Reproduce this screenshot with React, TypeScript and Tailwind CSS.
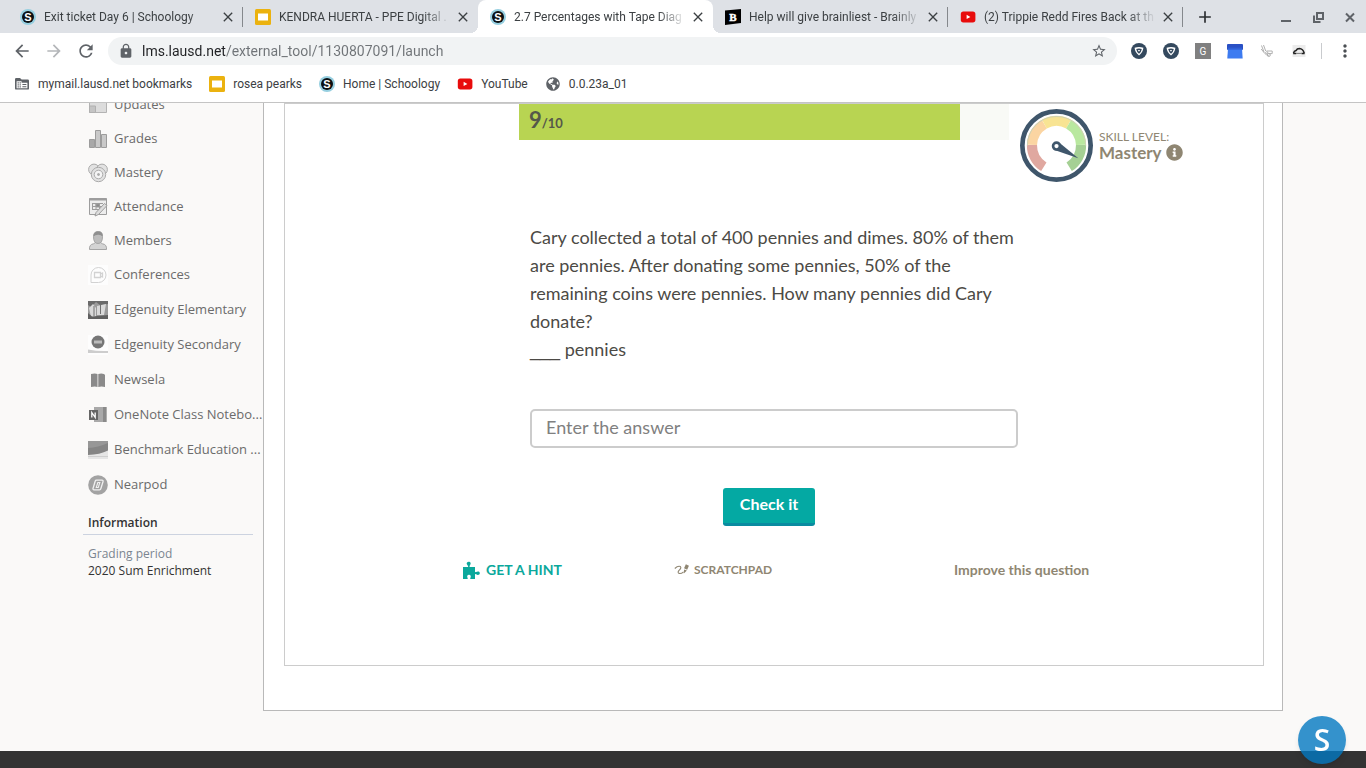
import React, { useState } from 'react';
import {
  MdAdd,
  MdArrowBack,
  MdArrowForward,
  MdClose,
  MdLock,
  MdMoreVert,
  MdRefresh,
  MdStarBorder,
} from 'react-icons/md';
import { FaGlobeAmericas, FaInfoCircle } from 'react-icons/fa';

/* ---------- browser icons ---------- */

const SchoologyIcon = () => (
  <svg viewBox="0 0 16 16" className="size-4 shrink-0">
    <circle cx="8" cy="8" r="8" fill="#96cfe0" />
    <circle cx="8" cy="8" r="6" fill="#0b0f12" />
    <text x="8" y="11.8" textAnchor="middle" fontSize="11" fontWeight="700" fill="#fff" fontFamily="Liberation Sans, sans-serif">S</text>
  </svg>
);

const SlidesIcon = () => (
  <svg viewBox="0 0 16 16" className="size-4 shrink-0">
    <rect width="16" height="16" rx="1.5" fill="#ebb20f" />
    <rect x="3" y="4.5" width="10" height="7" fill="#fff" />
  </svg>
);

const BrainlyIcon = () => (
  <svg viewBox="0 0 16 16" className="size-4 shrink-0">
    <path d="M0 1.5 16 0v14L0 16z" fill="#000" />
    <text x="8" y="11.8" textAnchor="middle" fontSize="11" fontWeight="700" fill="#fff" stroke="#fff" strokeWidth="0.4" fontFamily="Liberation Serif, serif">B</text>
  </svg>
);

const YouTubeIcon = () => (
  <svg viewBox="0 0 16 16" className="size-4 shrink-0">
    <rect x="0.8" y="2.4" width="14.6" height="11" rx="2.6" fill="#e80c0c" />
    <path d="M6.6 5.7v4.4l3.8-2.2z" fill="#fff" />
  </svg>
);

const ManagedFolderIcon = () => (
  <svg viewBox="0 0 16 16" className="size-4 shrink-0">
    <path d="M1 3.200Q1 2 2.200 2H6l1.600 1.600h6.200Q15 3.600 15 4.800v7.600q0 1.200-1.200 1.200H2.200Q1 13.600 1 12.400z" fill="#5f6368" />
    <path d="M2.600 5.200h5v1.600h5.800v5.400H2.600z" fill="#fff" />
    <path d="M3.600 6.200h1.200v1.200H3.600zm2 0h1.200v1.200H5.600zm-2 2h1.200v1.200H3.600zm2 0h1.200v1.200H5.600zm-2 2h1.200v1.200H3.600zm2 0h1.200v1.200H5.600zM8.400 8h4v1.100h-4zm0 2.200h4v1.100h-4z" fill="#5f6368" />
  </svg>
);

const ShieldIcon = () => (
  <svg viewBox="0 0 16 16" className="size-4">
    <circle cx="8" cy="8" r="8" fill="#34495e" />
    <path d="M3.600 4.800Q8 3.300 12.400 4.800 12 9.400 8 12.600 4 9.400 3.600 4.800z" fill="#fff" />
    <path d="M5.200 6Q8 5.200 10.800 6 10.400 8.800 8 10.800 5.600 8.800 5.200 6z" fill="#34495e" />
    <path d="M6.900 7h2.200L8 8.800z" fill="#fff" />
  </svg>
);

const GrammarIcon = () => (
  <svg viewBox="0 0 16 16" className="size-4">
    <rect width="16" height="16" fill="#808080" />
    <text x="8" y="11.6" textAnchor="middle" fontSize="10" fill="#fff" fontFamily="Roboto, sans-serif">G</text>
  </svg>
);

const BlueWindowIcon = () => (
  <svg viewBox="0 0 16 16" className="size-4">
    <rect y="1" width="16" height="6" rx="1" fill="#2a50c4" />
    <path d="M1 5h14l.7 10.6H.3z" fill="#3d7bf0" />
    <path d="M1 4.6h14v2H1z" fill="#2f5fd6" />
  </svg>
);

const WandIcon = () => (
  <svg viewBox="0 0 16 16" className="size-4" fill="none" stroke="#b0b0b0" strokeWidth="1">
    <path d="M2.500 2.500 5 9M4.500 2l2.200 6M2.200 6l3.600 4.500q1.500 1.500 4 2M6 9.500l3 1.500" />
    <path d="M7.500 8h5.700v2.600H9.600z" />
    <circle cx="9.800" cy="12" r="1.500" />
  </svg>
);

const CloudIcon = () => (
  <svg viewBox="0 0 16 16" className="size-4">
    <rect x="1.500" y="2" width="13" height="12" fill="#ececec" />
    <path d="M2.500 10.200Q3 8 5 7.600 6 5.600 8.400 5.600q3.600.2 4.800 4.600" fill="none" stroke="#222" strokeWidth="1.500" />
    <path d="M2.200 10.400h3M10.600 10.400h3" stroke="#222" strokeWidth="1.500" />
    <path d="M5 10.400h6" stroke="#777" />
  </svg>
);

/* ---------- sidebar icons ---------- */

const UpdatesIcon = () => (
  <svg viewBox="0 0 20 20" className="size-5 shrink-0">
    <path d="M1.5 5h17v12.500h-17z" fill="#dcdcdc" stroke="#b3b3b3" />
    <path d="M1.500 11h6v6.500h-6z" fill="#c4c4c4" stroke="#b0b0b0" />
  </svg>
);

const GradesIcon = () => (
  <svg viewBox="0 0 20 20" className="size-5 shrink-0" fill="#c9c9c9" stroke="#9c9c9c">
    <path d="M1.500 10.500h5v8h-5z" fill="#a8a8a8" />
    <path d="M7.500 1.500h5v17h-5z" />
    <path d="M13.500 5.500h5v13h-5z" />
  </svg>
);

const MasteryIcon = () => (
  <svg viewBox="0 0 20 20" className="size-5 shrink-0" fill="#e2e2e2" stroke="#aaa">
    <circle cx="6" cy="6.500" r="5.400" />
    <circle cx="14" cy="6.500" r="5.400" />
    <circle cx="10.500" cy="11.500" r="7.200" />
    <circle cx="10.500" cy="11.500" r="4.300" fill="#f4f4f4" />
    <circle cx="10.500" cy="11.500" r="1" fill="#aaa" />
  </svg>
);

const AttendanceIcon = () => (
  <svg viewBox="0 0 20 20" className="size-5 shrink-0" fill="none" stroke="#9d9d9d">
    <path d="M1.500 1.500h17v16h-17z" fill="#ededed" />
    <path d="M1.500 2.500h17" strokeWidth="2" />
    <path d="M4 6.500h11M4 9.500h11M4 12.500h8M4.500 6v7M8 6v7M11.500 6v7" />
    <path d="M8 7h3.500v3H8z" fill="#8a8a8a" />
    <path d="M7 19l1-3.500 8.500-9 2.500 2-8.500 9z" fill="#ddd" />
  </svg>
);

const MembersIcon = () => (
  <svg viewBox="0 0 20 20" className="size-5 shrink-0" stroke="#a5a5a5">
    <path d="M1.500 18.500q-.5-5 4-5.700l2-1.300h5l2 1.300q4.500.7 4 5.700z" fill="#d4d4d4" />
    <path d="M5.500 5.500q0-5 4.700-5t4.300 5q0 7-4.500 7t-4.500-7z" fill="#bdbdbd" />
    <path d="M5.500 5.500q0-5 4.700-5t4.300 5q-1.500-2-4.500-1.800t-4.500 1.800z" fill="#8f8f8f" stroke="none" />
  </svg>
);

const ConferencesIcon = () => (
  <svg viewBox="0 0 20 20" className="size-5 shrink-0" fill="none" stroke="#d2d2d2">
    <path d="M0 0h20v20H0z" fill="#fdfdfd" stroke="none" />
    <path d="M3 17.500V10a7.500 7.500 0 1 1 7.500 7.500z" />
    <path d="M6.500 7.500h6v5h-6zM12.500 9l2-1v4l-2-1" strokeWidth="1.300" />
  </svg>
);

const ElementaryIcon = () => (
  <svg viewBox="0 0 20 20" className="size-5 shrink-0">
    <path d="M0 1h20v18H0z" fill="#9a9a9a" />
    <path d="M0 1h20v3L12 5 8 2 3 7 0 5z" fill="#6a6a6a" />
    <path d="M1 8l4-4 3 4v9H3zM9 6l9-2-2 11H9z" fill="#d9d9d9" />
    <path d="M12.500 5v9M6 6v10" stroke="#707070" />
    <path d="M0 13l4 3.500 16-1.500v4H0z" fill="#606060" />
  </svg>
);

const SecondaryIcon = () => (
  <svg viewBox="0 0 20 20" className="size-5 shrink-0">
    <path d="M0 0h20v20H0z" fill="#fdfdfd" />
    <circle cx="10" cy="7" r="6.500" fill="#767676" />
    <path d="M6 5.500h8v3H6z" fill="#bcbcbc" />
    <path d="M0 14.500q10 2 20 1.500v2H0z" fill="#cdcdcd" />
  </svg>
);

const NewselaIcon = () => (
  <svg viewBox="0 0 20 20" className="size-5 shrink-0" fill="#8a8a8a">
    <path d="M3 4q4-1 6.500 0v13Q7 16 3 17zM10.300 4q3-1 5.700 0l1 1v12q-3.500-1-6.700 0z" />
  </svg>
);

const OneNoteIcon = () => (
  <svg viewBox="0 0 20 20" className="size-5 shrink-0">
    <path d="M6 2h12.500v15H6z" fill="#a9a9a9" />
    <path d="M15 2h3.500v15H15z" fill="#8a8a8a" />
    <path d="M1 5h9v10H1z" fill="#666" />
    <path d="M3.800 12.500v-5l3.400 5v-5" fill="none" stroke="#fff" strokeWidth="1.300" />
  </svg>
);

const BenchmarkIcon = () => (
  <svg viewBox="0 0 20 20" className="size-5 shrink-0">
    <path d="M0 1h20v18H0z" fill="#858585" />
    <path d="M0 8q10-.5 20-5v-2H0z" fill="#979797" />
    <path d="M0 15q12-.5 20-4.500V19H0z" fill="#e6e6e6" />
    <path d="M0 16.500h20" stroke="#cfcfcf" />
  </svg>
);

const NearpodIcon = () => (
  <svg viewBox="0 0 20 20" className="size-5 shrink-0">
    <circle cx="10" cy="10" r="9.800" fill="#a3a3a3" />
    <path d="M5 13.500l2.200-7.300q.3-1 1.300-1H14q1.500 0 1 1.500l-2.200 7.100q-.3 1-1.300 1H6q-1.300 0-1-1.300z" fill="none" stroke="#f1f1f1" strokeWidth="1.300" />
    <path d="M8.300 12.500l1.500-5h2l-1.500 5z" fill="none" stroke="#f1f1f1" strokeWidth="1.100" />
  </svg>
);

/* ---------- quiz icons ---------- */

const Gauge = () => (
  <svg viewBox="0 0 72 72" className="size-[73px] shrink-0" fill="none">
    <circle cx="36" cy="36" r="33.700" fill="#fff" stroke="#3f566b" strokeWidth="4.600" />
    <g strokeWidth="10">
      <path d="M23.500 57A24.700 24.700 0 0 1 11.800 35.500" stroke="#e0a8a0" />
      <path d="M11.800 35.500A24.700 24.700 0 0 1 24 14.800" stroke="#fbd5a2" />
      <path d="M24 14.800A24.700 24.700 0 0 1 48 14.800" stroke="#f8e493" />
      <path d="M48 14.800A24.700 24.700 0 0 1 60.200 35.500" stroke="#b9e89f" />
      <path d="M60.200 35.500A24.700 24.700 0 0 1 48.500 57" stroke="#a5d094" />
    </g>
    <path d="M7.300 36a28.700 28.700 0 0 1 57.400 0" stroke="#cfd2b4" strokeWidth="1" />
    <path d="M38 32.500 57.500 48.500 34 40.500z" fill="#3f566b" />
    <circle cx="36" cy="36.500" r="3.400" fill="#fff" stroke="#3f566b" strokeWidth="2.600" />
  </svg>
);

const PuzzleIcon = () => (
  <svg viewBox="0 0 18 18" className="size-[18px]" fill="#0ba89c">
    <path d="M1 6h4.700c.5 0 .6-.6.300-1.100C5.200 3.500 4.200 3 4.900 1.700 5.500.5 8 .5 8.500 1.700c.6 1.300-.6 2-.9 3.200-.1.600 0 1.100.6 1.100H13v4.500c0 .7.600.800 1.100.5 1.200-.9 3.400-1 3.700 1 .2 2-2.300 2.400-3.600 1.300-.6-.4-1.200-.3-1.200.4V18H8.800c-.7 0-.7-.6-.4-1.100.9-1.300.3-3.100-1.400-3.100s-2.300 1.800-1.400 3.100c.3.500.2 1.100-.5 1.100H1z" />
  </svg>
);

const ScribbleIcon = () => (
  <svg viewBox="0 0 16 14" className="h-[14px] w-4" fill="none" stroke="#8f8672">
    <path d="M.8 5.500Q4 2.500 6.400 3.600 7.800 5 4.800 7.600 3.400 9.400 5 10.400 7 11 9.600 8.800" strokeWidth="1.100" />
    <path d="M11.600 6 13.400 2" strokeWidth="3.400" />
    <path d="M9.800 10.600l.3-4.200 2.800 1.200z" fill="#8f8672" stroke="none" />
  </svg>
);

/* ---------- data ---------- */

const TABS = [
  { title: 'Exit ticket Day 6 | Schoology', icon: <SchoologyIcon />, divider: true },
  { title: 'KENDRA HUERTA - PPE Digital .', icon: <SlidesIcon /> },
  { title: '2.7 Percentages with Tape Diag', icon: <SchoologyIcon />, active: true },
  { title: 'Help will give brainliest - Brainly', icon: <BrainlyIcon />, divider: true },
  { title: '(2) Trippie Redd Fires Back at th', icon: <YouTubeIcon />, divider: true },
];

const BOOKMARKS = [
  { title: 'mymail.lausd.net bookmarks', icon: <ManagedFolderIcon /> },
  { title: 'rosea pearks', icon: <SlidesIcon /> },
  { title: 'Home | Schoology', icon: <SchoologyIcon /> },
  { title: 'YouTube', icon: <YouTubeIcon /> },
  { title: '0.0.23a_01', icon: <FaGlobeAmericas className="mx-px size-3.5 text-[#5f6368]" /> },
];

const EXTENSIONS = [
  { name: 'Shield', icon: <ShieldIcon /> },
  { name: 'Shield 2', icon: <ShieldIcon /> },
  { name: 'Grammar', icon: <GrammarIcon /> },
  { name: 'Window', icon: <BlueWindowIcon /> },
  { name: 'Wand', icon: <WandIcon /> },
  { name: 'Cloud', icon: <CloudIcon /> },
];

const COURSE_LINKS = [
  { title: 'Updates', icon: <UpdatesIcon /> },
  { title: 'Grades', icon: <GradesIcon /> },
  { title: 'Mastery', icon: <MasteryIcon /> },
  { title: 'Attendance', icon: <AttendanceIcon /> },
  { title: 'Members', icon: <MembersIcon /> },
  { title: 'Conferences', icon: <ConferencesIcon /> },
];

const APP_LINKS = [
  { title: 'Edgenuity Elementary', icon: <ElementaryIcon /> },
  { title: 'Edgenuity Secondary', icon: <SecondaryIcon /> },
  { title: 'Newsela', icon: <NewselaIcon /> },
  { title: 'OneNote Class Notebo...', icon: <OneNoteIcon /> },
  { title: 'Benchmark Education ...', icon: <BenchmarkIcon /> },
  { title: 'Nearpod', icon: <NearpodIcon /> },
];

/* ---------- sections ---------- */

function TabStrip() {
  return (
    <div className="flex h-[33px] items-stretch bg-[#dee1e6] pl-2">
      {TABS.map(tab => (
        <div
          key={tab.title}
          className={`relative flex min-w-0 max-w-[235px] flex-1 items-center pl-3 pr-[7px] ${
            tab.active
              ? "rounded-t-lg bg-white before:absolute before:bottom-0 before:-left-2 before:size-2 before:bg-[radial-gradient(circle_at_0_0,transparent_8px,white_8px)] before:content-[''] after:absolute after:bottom-0 after:-right-2 after:size-2 after:bg-[radial-gradient(circle_at_100%_0,transparent_8px,white_8px)] after:content-['']"
              : ''
          }`}
        >
          {tab.icon}
          <span className="ml-2 min-w-0 flex-1 overflow-hidden whitespace-nowrap [mask-image:linear-gradient(to_left,transparent,black_28px)]">
            {tab.title}
          </span>
          <button type="button" aria-label="Close tab" className="ml-1 shrink-0">
            <MdClose className="size-4 text-[#3c4043]" />
          </button>
          {tab.divider && <span className="absolute right-0 h-5 w-px bg-[#85888c]" />}
        </div>
      ))}
      <button type="button" aria-label="New tab" className="ml-3">
        <MdAdd className="size-5 text-[#2b2e31]" />
      </button>
      <div className="ml-auto flex items-center gap-4 pr-2 text-[#5f6368]">
        <button type="button" aria-label="Minimize">
          <svg viewBox="0 0 16 16" className="size-4"><path d="M3 12h10" stroke="currentColor" strokeWidth="2" /></svg>
        </button>
        <button type="button" aria-label="Restore">
          <svg viewBox="0 0 16 16" className="size-4" fill="none" stroke="currentColor" strokeWidth="2">
            <path d="M7 4h6v6H7z" />
            <path d="M4 6.500V13h6.500" />
          </svg>
        </button>
        <button type="button" aria-label="Close window">
          <svg viewBox="0 0 16 16" className="size-4"><path d="M4 4.500l8 8M12 4.500l-8 8" stroke="currentColor" strokeWidth="2" /></svg>
        </button>
      </div>
    </div>
  );
}

function Toolbar() {
  const [url, setUrl] = useState('lms.lausd.net/external_tool/1130807091/launch');

  return (
    <div className="flex h-9 items-center bg-white pl-3">
      <div className="flex gap-3 text-[#5f6368]">
        <button type="button" aria-label="Back"><MdArrowBack className="size-5" /></button>
        <button type="button" aria-label="Forward"><MdArrowForward className="size-5 text-[#b4b6b9]" /></button>
        <button type="button" aria-label="Reload"><MdRefresh className="size-5" /></button>
      </div>
      <div className="ml-3 flex h-7 flex-1 items-center rounded-full bg-[#f1f3f4] px-2.5">
        <MdLock className="size-4 shrink-0 text-[#5f6368]" />
        <input
          type="text"
          aria-label="Address"
          value={url}
          onChange={e => setUrl(e.target.value)}
          className="ml-2 min-w-0 flex-1 bg-[linear-gradient(to_right,#202124_84px,#6f7377_84px)] bg-clip-text text-sm text-transparent caret-black outline-none"
        />
        <button type="button" aria-label="Bookmark this page">
          <MdStarBorder className="size-4 text-[#5f6368]" />
        </button>
      </div>
      <div className="ml-3.5 flex gap-4">
        {EXTENSIONS.map(ext => (
          <button key={ext.name} type="button" aria-label={ext.name}>{ext.icon}</button>
        ))}
      </div>
      <span className="ml-3.5 h-4 w-px bg-[#c9cbce]" />
      <button type="button" aria-label="Menu" className="ml-[13px] mr-[11px]">
        <MdMoreVert className="size-5 text-[#4b4f53]" />
      </button>
    </div>
  );
}

function BookmarksBar() {
  return (
    <div className="flex h-[34px] items-center gap-[17px] border-b border-[#c4c4c4] bg-white pb-1 pl-3.5">
      {BOOKMARKS.map(b => (
        <a key={b.title} href="#" className="flex items-center gap-2 whitespace-nowrap">
          {b.icon}
          {b.title}
        </a>
      ))}
    </div>
  );
}

function Sidebar() {
  return (
    <aside className="w-[180px] shrink-0 text-[13px]">
      <nav className="-mt-[15px] pl-[5px] text-[#6b6b6b]">
        {COURSE_LINKS.map(link => (
          <a key={link.title} href="#" className="flex h-[34px] items-center gap-1.5 whitespace-nowrap">
            {link.icon}
            {link.title}
          </a>
        ))}
        {APP_LINKS.map(link => (
          <a key={link.title} href="#" className="flex h-[35px] items-center gap-1.5 whitespace-nowrap">
            {link.icon}
            {link.title}
          </a>
        ))}
      </nav>
      <h3 className="mt-3 mr-2.5 border-b border-[#ccd3e0] pb-[3px] pl-[5px] text-xs leading-[17px] font-semibold text-[#333]">Information</h3>
      <dl className="mt-2.5 pl-[5px] text-xs leading-[17px]">
        <dt className="text-[#7b8590]">Grading period</dt>
        <dd className="text-[#333]">2020 Sum Enrichment</dd>
      </dl>
    </aside>
  );
}

function Quiz() {
  const [answer, setAnswer] = useState('');
  const done = 9;
  const total = 10;

  return (
    <section className="h-[563px] border border-[#ccc] bg-white font-[Lato,sans-serif] text-[#4c4a45]">
      <div className="grid grid-cols-[234px_1fr_254px]">
        <div className="col-start-2 h-9 bg-[#f9faf6]">
          <div
            className="h-full bg-[#b8d452] pt-0.5 pl-2.5 text-[13px] leading-7 font-bold text-[#55584a]"
            style={{ width: `${(done / total) * 100}%` }}
          >
            <span className="text-[22px]">{done}</span>/{total}
          </div>
        </div>
        <div className="flex items-center gap-1.5 pt-[5px] pl-[11px] text-[#8f8672]">
          <Gauge />
          <div>
            <p className="text-xs leading-[14px]">SKILL LEVEL:</p>
            <p className="flex items-center gap-1 text-[17px] leading-[17px] font-bold">
              Mastery
              <button type="button" aria-label="About skill levels"><FaInfoCircle className="size-[17px]" /></button>
            </p>
          </div>
        </div>
      </div>

      <form className="mx-[245px] mt-[41px]" onSubmit={e => e.preventDefault()}>
        <label htmlFor="answer" className="block text-lg leading-7">
          Cary collected a total of 400 pennies and dimes. 80% of them are pennies. After donating some pennies, 50% of the remaining coins were pennies. How many pennies did Cary donate?
          <br />
          <span className="font-['Liberation_Sans',sans-serif]">___</span> pennies
        </label>
        <input
          id="answer"
          type="text"
          value={answer}
          onChange={e => setAnswer(e.target.value)}
          placeholder="Enter the answer"
          className="mt-[45px] block h-[39px] w-full rounded-[5px] border-2 border-[#ccc] px-3.5 pb-1 text-lg outline-none placeholder:text-[#808080]"
        />
        <div className="mt-10 flex justify-center pr-2.5">
          <button
            type="submit"
            className="h-[38px] w-[92px] rounded-[3px] border-b-3 border-[#0a8ba0] bg-[#04a9a3] pb-[3px] text-base font-bold text-white"
          >
            Check it
          </button>
        </div>
      </form>

      <div className="mt-[34px] mr-[172px] ml-[177px] grid grid-cols-[1fr_280px_137px] items-center font-bold whitespace-nowrap text-[#8f8672]">
        <button type="button" className="flex items-center gap-1.5 text-sm text-[#0ba89c]"><PuzzleIcon /> GET A HINT</button>
        <button type="button" className="flex items-center gap-1 text-xs"><ScribbleIcon /> SCRATCHPAD</button>
        <a href="#" className="text-sm">Improve this question</a>
      </div>
    </section>
  );
}

export default function App() {
  return (
    <div className="flex min-h-screen flex-col bg-[#faf9f8] font-['Open_Sans',sans-serif]">
      <header className="relative z-10 font-[Roboto,sans-serif] text-xs text-[#3c4043]">
        <TabStrip />
        <Toolbar />
        <BookmarksBar />
      </header>

      <div className="mx-auto flex w-full max-w-[1200px]">
        <Sidebar />
        <main className="min-w-0 flex-1 border border-t-0 border-[#b9b9b9] bg-white pr-[18px] pb-11 pl-5">
          <Quiz />
        </main>
      </div>

      <footer className="mt-10 flex-1 bg-[#333]" />

      <button
        type="button"
        aria-label="Support"
        className="fixed right-5 bottom-1 z-20 size-12 rounded-full bg-[#0278c0]/80 text-[30px] leading-none font-semibold text-white shadow-md"
      >
        S
      </button>
    </div>
  );
}
